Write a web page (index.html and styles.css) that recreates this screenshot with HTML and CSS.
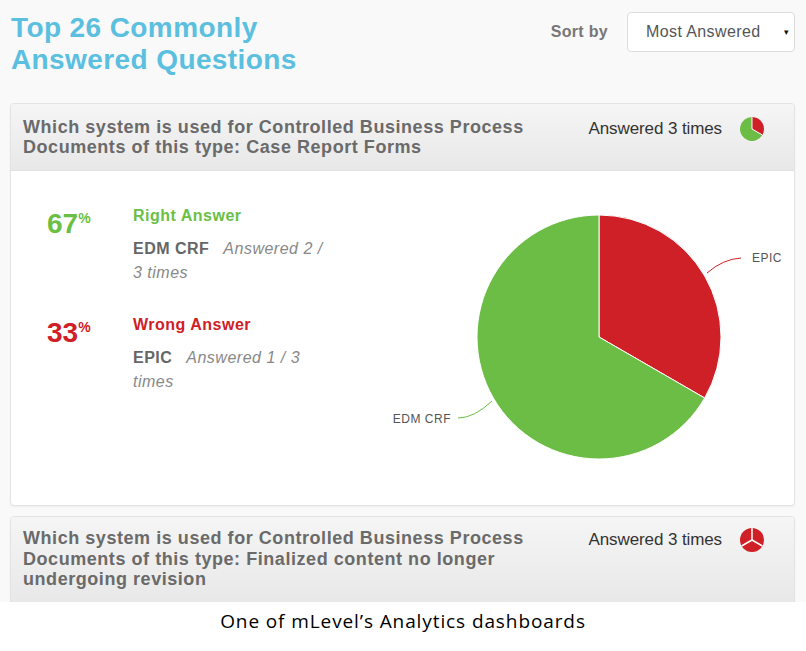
FILE: index.html
```html
<!DOCTYPE html>
<html>
<head>
<meta charset="utf-8">
<link rel="stylesheet" href="styles.css">
</head>
<body>
<div class="dash">
  <header class="top">
    <h1 class="title">Top 26 Commonly<br>Answered Questions</h1>
    <div class="sort">
      <span class="sort-label">Sort by</span>
      <div class="select"><span>Most Answered</span><span class="caret">&#9662;</span></div>
    </div>
  </header>

  <section class="card">
    <div class="card-head">
      <h2 class="question">Which system is used for Controlled Business Process Documents of this type: Case Report Forms</h2>
      <div class="meta">
        <span>Answered 3 times</span>
        <svg class="mini" width="24" height="24" viewBox="0 0 24 24">
          <path d="M12 12 L12 0 A12 12 0 0 1 22.39 18 Z" fill="#cf2027"/>
          <path d="M12 12 L22.39 18 A12 12 0 1 1 12 0 Z" fill="#6cbd45"/>
          <path d="M12 0 L12 12 L22.39 18" fill="none" stroke="#fff" stroke-width="1"/>
        </svg>
      </div>
    </div>
    <div class="card-body">
      <div class="answers">
        <div class="answer">
          <div class="pct green">67<sup>%</sup></div>
          <div class="info">
            <div class="label green">Right Answer</div>
            <p class="detail"><b>EDM CRF</b> <i>Answered 2 /</i> <i>3 times</i></p>
          </div>
        </div>
        <div class="answer">
          <div class="pct red">33<sup>%</sup></div>
          <div class="info">
            <div class="label red">Wrong Answer</div>
            <p class="detail"><b>EPIC</b> <i>Answered 1 / 3</i> <i>times</i></p>
          </div>
        </div>
      </div>
      <svg class="chart" width="420" height="334" viewBox="0 0 420 334">
        <path d="M228 166 L228 44 A122 122 0 0 1 333.66 227 Z" fill="#cf2027" stroke="#fff" stroke-width="1"/>
        <path d="M228 166 L333.66 227 A122 122 0 1 1 228 44 Z" fill="#6cbd45" stroke="#fff" stroke-width="1"/>
        <path d="M336 102 Q352 88 370 87" fill="none" stroke="#cf2027" stroke-width="1"/>
        <path d="M121 230 Q103 247 87 247" fill="none" stroke="#6cbd45" stroke-width="1"/>
        <text x="381" y="91" class="plabel">EPIC</text>
        <text x="80" y="252" class="plabel" text-anchor="end">EDM CRF</text>
      </svg>
    </div>
  </section>

  <section class="card">
    <div class="card-head tall">
      <h2 class="question">Which system is used for Controlled Business Process Documents of this type: Finalized content no longer undergoing revision</h2>
      <div class="meta">
        <span>Answered 3 times</span>
        <svg class="mini" width="24" height="24" viewBox="0 0 24 24">
          <circle cx="12" cy="12" r="12" fill="#cf2027"/>
          <path d="M12 0 L12 12 M12 12 L22.39 18 M12 12 L1.61 18" fill="none" stroke="#fff" stroke-width="1.5"/>
        </svg>
      </div>
    </div>
  </section>
</div>
<p class="caption">One of mLevel’s Analytics dashboards</p>
</body>
</html>
```

FILE: styles.css
```css
html, body {
  margin: 0;
  padding: 0;
  background: #ffffff;
}
body {
  width: 806px;
  font-family: "Liberation Sans", Arial, sans-serif;
}
.dash {
  background: #f9f9f9;
  height: 602px;
  overflow: hidden;
  padding: 0 11px 0 10px;
  box-sizing: border-box;
}
.top {
  display: flex;
  justify-content: space-between;
  align-items: flex-start;
  padding-top: 12px;
}
.title {
  margin: 0 0 0 1px;
  font-size: 28px;
  line-height: 32px;
  letter-spacing: 0.4px;
  font-weight: bold;
  color: #5bbfe0;
}
.sort {
  display: flex;
  align-items: center;
  margin-top: 0;
}
.sort-label {
  font-size: 16px;
  font-weight: bold;
  color: #777;
  margin-right: 19px;
  letter-spacing: 0.3px;
}
.select {
  width: 168px;
  height: 40px;
  box-sizing: border-box;
  border: 1px solid #dcdcdc;
  border-radius: 4px;
  background: #fff;
  display: flex;
  align-items: center;
  justify-content: space-between;
  padding: 0 5px 0 18px;
  font-size: 16px;
  letter-spacing: 0.4px;
  color: #555;
}
.caret {
  font-size: 9px;
  color: #111;
}
.card {
  margin-top: 27px;
  border: 1px solid #e3e3e3;
  border-radius: 4px;
  background: #fff;
  box-shadow: 0 1px 2px rgba(0,0,0,0.05);
  overflow: hidden;
}
.card + .card {
  margin-top: 10px;
}
.card-head {
  display: flex;
  justify-content: space-between;
  align-items: flex-start;
  padding: 13px 30px 13px 12px;
  background: linear-gradient(#f5f5f5, #e8e8e8);
  border-bottom: 1px solid #e2e2e2;
}
.card-head.tall {
  padding-top: 11px;
  padding-bottom: 14px;
}
.question {
  margin: 0;
  width: 540px;
  font-size: 18px;
  line-height: 20px;
  letter-spacing: 0.55px;
  font-weight: bold;
  color: #6a6a6a;
}
.tall .question {
  line-height: 20.5px;
}
.meta {
  display: flex;
  align-items: center;
  font-size: 17px;
  letter-spacing: -0.1px;
  color: #333;
}
.mini {
  margin-left: 18px;
}
.card-body {
  display: flex;
  align-items: flex-start;
  padding: 0 3px 0 36px;
}
.answers {
  padding-top: 35px;
}
.answer {
  display: flex;
  margin-bottom: 30px;
}
.pct {
  width: 86px;
  font-size: 28px;
  line-height: 32px;
  font-weight: bold;
  margin-top: 2px;
}
.pct sup {
  font-size: 14px;
  vertical-align: top;
  line-height: 20px;
}
.info {
  width: 196px;
}
.label {
  font-size: 16px;
  font-weight: bold;
  line-height: 20px;
  letter-spacing: 0.5px;
  margin-bottom: 11px;
}
.detail {
  margin: 0;
  font-size: 16px;
  line-height: 24px;
  letter-spacing: 0.5px;
  color: #666;
}
.detail b {
  font-weight: bold;
  color: #666;
  margin-right: 9px;
}
.detail i {
  color: #888;
}
.green { color: #6abf45; }
.red { color: #cf2027; }
.chart {
  margin-left: auto;
  display: block;
}
.plabel {
  font-family: "Liberation Sans", Arial, sans-serif;
  font-size: 12px;
  letter-spacing: 0.5px;
  fill: #555;
}
.caption {
  margin: 5px 0 0;
  text-align: center;
  font-family: "Open Sans", sans-serif;
  font-size: 19px;
  letter-spacing: 0.9px;
  line-height: 28px;
  color: #000;
}
```
